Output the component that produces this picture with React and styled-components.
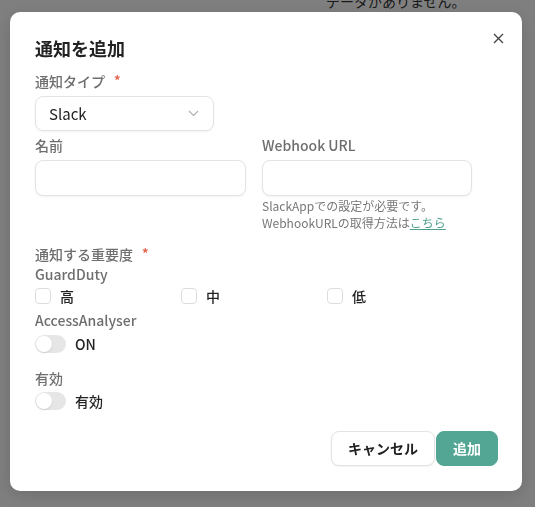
import React, { useState } from "react";
import styled, { createGlobalStyle } from "styled-components";

const GlobalStyle = createGlobalStyle`
  html, body {
    margin: 0;
    padding: 0;
    background: #ffffff;
    font-family: "Noto Sans CJK JP", "Noto Sans", sans-serif;
    color: #222222;
  }
  * { box-sizing: border-box; }
`;

const Page = styled.div`
  width: 535px;
  height: 507px;
  overflow: hidden;
`;

const EmptyText = styled.p`
  margin: -9px 0 0 326px;
  font-size: 14px;
  line-height: 20px;
  color: #333333;
`;

const Overlay = styled.div`
  position: fixed;
  inset: 0;
  background: rgba(0, 0, 0, 0.5);
  display: flex;
  align-items: flex-start;
  padding: 12px 0 0 10px;
`;

const Modal = styled.div`
  position: relative;
  width: 512px;
  background: #ffffff;
  border-radius: 10px;
  box-shadow: 0 4px 16px rgba(0, 0, 0, 0.15);
  padding: 23px 24px 25px 25px;
  display: flex;
  flex-direction: column;
`;

const Title = styled.h2`
  margin: 0;
  font-size: 18px;
  line-height: 26px;
  font-weight: 700;
  color: #222222;
`;

const CloseButton = styled.button`
  position: absolute;
  top: 16px;
  right: 14px;
  width: 20px;
  height: 20px;
  border: none;
  background: none;
  padding: 0;
  display: flex;
  align-items: center;
  justify-content: center;
  color: #444444;
  cursor: pointer;
`;

const Label = styled.div`
  font-size: 14px;
  line-height: 20px;
  font-weight: 500;
  color: #6e6e6e;
  margin-top: ${(p) => p.$top || 0}px;
  display: flex;
  align-items: center;
`;

const Required = styled.span`
  color: #e5644e;
  font-size: 13px;
  font-weight: 700;
  margin-left: 9px;
  line-height: 14px;
  align-self: flex-start;
  margin-top: 2px;
`;

const SelectBox = styled.div`
  margin-top: 5px;
  width: 179px;
  height: 35px;
  border: 1px solid #e3e3e3;
  border-radius: 8px;
  box-shadow: 0 1px 2px rgba(0, 0, 0, 0.05);
  display: flex;
  align-items: center;
  justify-content: space-between;
  padding: 0 14px 0 13px;
  font-size: 15px;
  color: #222222;
`;

const TwoCols = styled.div`
  margin-top: 4px;
  display: grid;
  grid-template-columns: 211px 210px;
  column-gap: 16px;
`;

const Field = styled.div`
  display: flex;
  flex-direction: column;
`;

const TextInput = styled.input`
  margin-top: 5px;
  width: 100%;
  height: 36px;
  border: 1px solid #e3e3e3;
  border-radius: 8px;
  box-shadow: 0 1px 2px rgba(0, 0, 0, 0.05);
  padding: 0 12px;
  font-size: 14px;
  font-family: inherit;
  outline: none;
`;

const Help = styled.div`
  margin-top: 1px;
  font-size: 12px;
  line-height: 17px;
  color: #777777;
  a {
    color: #4ea08d;
    text-decoration: underline;
  }
`;

const CheckRow = styled.div`
  margin-top: 2px;
  display: grid;
  grid-template-columns: repeat(3, 146px);
`;

const CheckItem = styled.label`
  display: flex;
  align-items: center;
  gap: 9px;
  font-size: 14px;
  line-height: 20px;
  font-weight: 500;
  color: #222222;
`;

const Box = styled.span`
  width: 16px;
  height: 16px;
  border: 1px solid #dddddd;
  border-radius: 4px;
  background: #ffffff;
`;

const SwitchRow = styled.div`
  margin-top: ${(p) => p.$top || 0}px;
  display: flex;
  align-items: center;
  gap: 9px;
  font-size: 14px;
  line-height: 20px;
  font-weight: 500;
  color: #222222;
`;

const Track = styled.span`
  width: 31px;
  height: 18px;
  border-radius: 9px;
  background: #e6e6e6;
  display: flex;
  align-items: center;
  padding: 1px;
`;

const Knob = styled.span`
  width: 16px;
  height: 16px;
  border-radius: 50%;
  background: #ffffff;
  box-shadow: 0 1px 2px rgba(0, 0, 0, 0.12);
`;

const Footer = styled.div`
  margin-top: 20px;
  display: flex;
  justify-content: flex-end;
  gap: 1px;
`;

const Button = styled.button`
  height: 35px;
  padding: 0 16px;
  min-width: ${(p) => (p.$primary ? 60 : 103)}px;
  border-radius: 8px;
  font-family: inherit;
  font-size: 14px;
  font-weight: 700;
  border: 1px solid ${(p) => (p.$primary ? "#53a693" : "#e3e3e3")};
  background: ${(p) => (p.$primary ? "#53a693" : "#ffffff")};
  color: ${(p) => (p.$primary ? "#ffffff" : "#222222")};
  box-shadow: ${(p) => (p.$primary ? "none" : "0 1px 2px rgba(0,0,0,0.06)")};
  cursor: pointer;
`;

const Chevron = () => (
  <svg width="11" height="7" viewBox="0 0 11 7" fill="none">
    <path d="M1 1l4.5 4.5L10 1" stroke="#b0b0b0" strokeWidth="1.1" />
  </svg>
);

const CloseIcon = () => (
  <svg width="11" height="11" viewBox="0 0 11 11" fill="none">
    <path d="M1 1l9 9M10 1l-9 9" stroke="#444" strokeWidth="1.3" />
  </svg>
);

const Switch = ({ label, top }) => (
  <SwitchRow $top={top}>
    <Track>
      <Knob />
    </Track>
    {label}
  </SwitchRow>
);

export default function App() {
  const [name, setName] = useState("");
  const [url, setUrl] = useState("");

  return (
    <Page>
      <GlobalStyle />
      <EmptyText>データがありません。</EmptyText>
      <Overlay>
        <Modal>
          <Title>通知を追加</Title>
          <CloseButton aria-label="close">
            <CloseIcon />
          </CloseButton>

          <Label $top={9.5}>
            通知タイプ<Required>*</Required>
          </Label>
          <SelectBox>
            Slack
            <Chevron />
          </SelectBox>

          <TwoCols>
            <Field>
              <Label>名前</Label>
              <TextInput value={name} onChange={(e) => setName(e.target.value)} />
            </Field>
            <Field>
              <Label>Webhook URL</Label>
              <TextInput value={url} onChange={(e) => setUrl(e.target.value)} />
              <Help>
                SlackAppでの設定が必要です。
                <br />
                WebhookURLの取得方法は<a href="#">こちら</a>
              </Help>
            </Field>
          </TwoCols>

          <Label $top={13}>
            通知する重要度<Required>*</Required>
          </Label>
          <Label>GuardDuty</Label>
          <CheckRow>
            {["高", "中", "低"].map((s) => (
              <CheckItem key={s}>
                <Box />
                {s}
              </CheckItem>
            ))}
          </CheckRow>
          <Label $top={4}>AccessAnalyser</Label>
          <Switch label="ON" top={4} />

          <Label $top={14}>有効</Label>
          <Switch label="有効" top={3} />

          <Footer>
            <Button>キャンセル</Button>
            <Button $primary>追加</Button>
          </Footer>
        </Modal>
      </Overlay>
    </Page>
  );
}
